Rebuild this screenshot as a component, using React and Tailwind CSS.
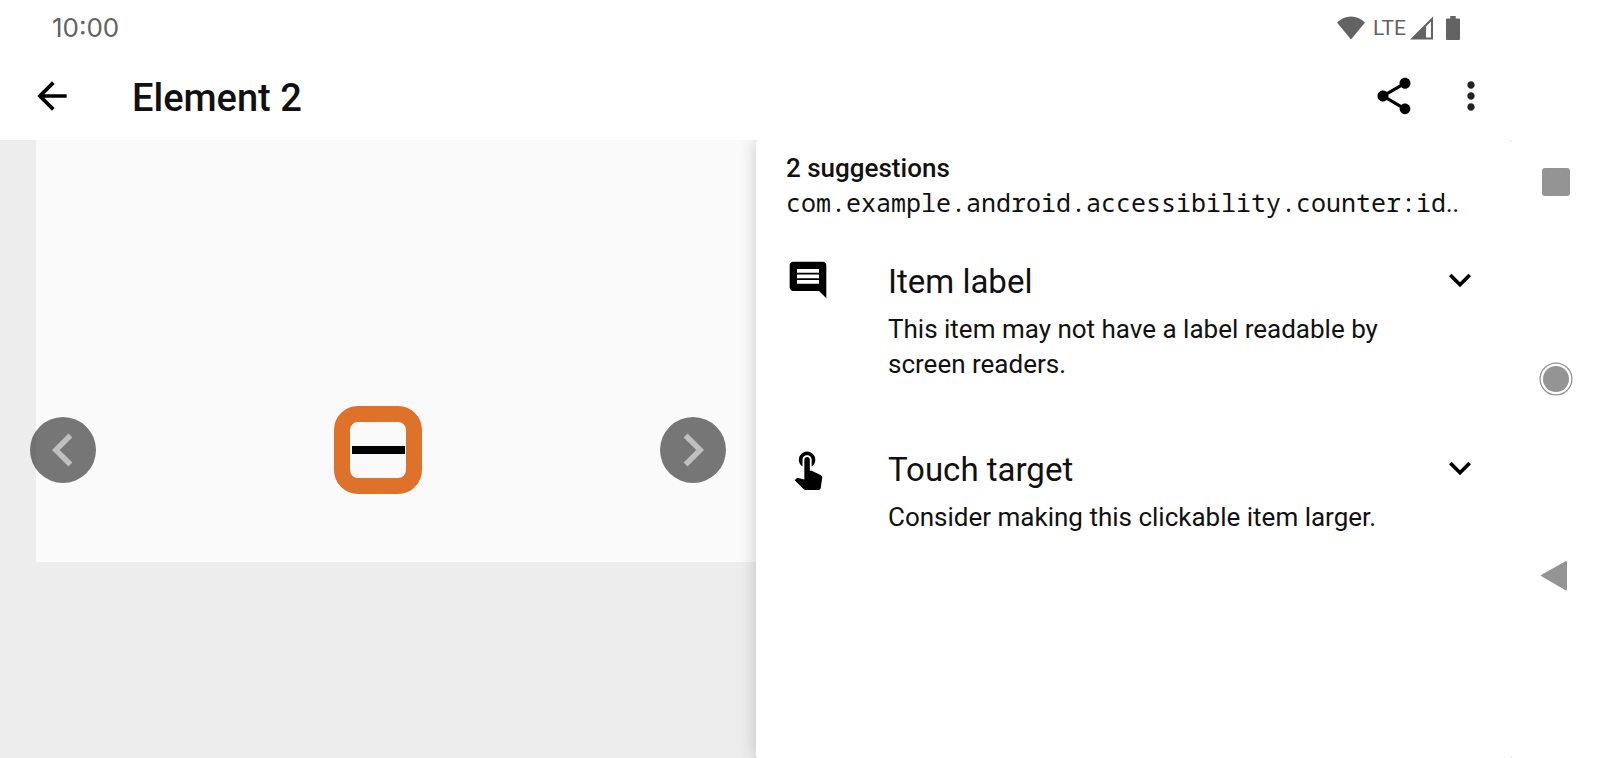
import React from "react";

function Icon({ d, className }) {
  return (
    <svg viewBox="0 0 24 24" className={className} fill="currentColor" aria-hidden="true">
      <path d={d} />
    </svg>
  );
}

const ICONS = {
  back: "M20 11H7.83l5.59-5.59L12 4l-8 8 8 8 1.41-1.41L7.83 13H20v-2z",
  share:
    "M18 16.08c-.76 0-1.44.3-1.96.77L8.91 12.7c.05-.23.09-.46.09-.7s-.04-.47-.09-.7l7.05-4.11c.54.5 1.25.81 2.04.81 1.66 0 3-1.34 3-3s-1.34-3-3-3-3 1.34-3 3c0 .24.04.47.09.7L8.04 9.81C7.5 9.31 6.79 9 6 9c-1.66 0-3 1.34-3 3s1.34 3 3 3c.79 0 1.5-.31 2.04-.81l7.12 4.16c-.05.21-.08.43-.08.65 0 1.61 1.31 2.92 2.92 2.92s2.92-1.31 2.92-2.92-1.31-2.92-2.92-2.92z",
  more: "M12 8c1.1 0 2-.9 2-2s-.9-2-2-2-2 .9-2 2 .9 2 2 2zm0 2c-1.1 0-2 .9-2 2s.9 2 2 2 2-.9 2-2-.9-2-2-2zm0 6c-1.1 0-2 .9-2 2s.9 2 2 2 2-.9 2-2-.9-2-2-2z",
  left: "M15.41 7.41L14 6l-6 6 6 6 1.41-1.41L10.83 12z",
  right: "M10 6L8.59 7.41 13.17 12l-4.58 4.59L10 18l6-6z",
  down: "M16.59 8.59L12 13.17 7.41 8.59 6 10l6 6 6-6z",
  comment:
    "M21.99 4c0-1.1-.89-2-1.99-2H4c-1.1 0-2 .9-2 2v12c0 1.1.9 2 2 2h14l4 4-.01-18zM18 14H6v-2h12v2zm0-3H6V9h12v2zm0-3H6V6h12v2z",
  touch:
    "M9 11.24V7.5C9 6.12 10.12 5 11.5 5S14 6.12 14 7.5v3.74c1.21-.81 2-2.18 2-3.74C16 5.01 13.99 3 11.5 3S7 5.01 7 7.5c0 1.56.79 2.93 2 3.74zm9.84 4.63l-4.54-2.26c-.17-.07-.35-.11-.54-.11H13v-6c0-.83-.67-1.5-1.5-1.5S10 6.67 10 7.5v10.74l-3.43-.72c-.08-.01-.15-.03-.24-.03-.31 0-.59.13-.79.33l-.79.8 4.94 4.94c.27.27.65.44 1.06.44h6.79c.75 0 1.33-.55 1.44-1.28l.75-5.27c.01-.07.02-.14.02-.2 0-.62-.38-1.16-.91-1.38z",
};

function StatusBar() {
  return (
    <div className="flex h-14 items-center justify-between px-[52px] text-[#636363]">
      <span className="font-['Inter',sans-serif] text-[26px] leading-none">10:00</span>
      <div className="flex items-center">
        <svg viewBox="0 0 28 24" className="h-6 w-7" fill="currentColor" aria-hidden="true">
          <path d="M0 6.500C4 2.600 8.800.5 14 .5s10 2.100 14 6L14 23.500z" />
        </svg>
        <span className="ml-2 text-[21px] leading-none">LTE</span>
        <svg viewBox="0 0 23 24" className="ml-1 h-6 w-[23px]" fill="currentColor" aria-hidden="true">
          <path fillRule="evenodd" d="M23 .5v23H0zM21 5.500l-5 5v11h5z" />
        </svg>
        <svg viewBox="0 0 14 24" className="ml-[13px] h-6 w-3.5" fill="currentColor" aria-hidden="true">
          <path d="M4.300 0h5.400v2.400H13a1 1 0 0 1 1 1V23a1 1 0 0 1-1 1H1a1 1 0 0 1-1-1V3.400a1 1 0 0 1 1-1h3.300z" />
        </svg>
      </div>
    </div>
  );
}

function AppBar() {
  return (
    <div className="flex h-[84px] items-center pr-[19px] pb-1 pl-[30px]">
      <button type="button" aria-label="Back" className="text-black">
        <Icon d={ICONS.back} className="size-11" />
      </button>
      <h1 className="ml-[58px] flex-1 pt-1 text-[38px] leading-[44px] font-medium">Element 2</h1>
      <button type="button" aria-label="Share" className="text-black">
        <Icon d={ICONS.share} className="size-11" />
      </button>
      <button type="button" aria-label="More options" className="ml-[33px] text-[#222]">
        <Icon d={ICONS.more} className="size-11" />
      </button>
    </div>
  );
}

function PageButton({ label, d }) {
  return (
    <button type="button" aria-label={label} className="rounded-full bg-black/53 text-[#bfbfbf]">
      <Icon d={d} className="size-[66px]" />
    </button>
  );
}

function Preview() {
  return (
    <section aria-label="Preview" className="grid grid-cols-1 content-start bg-[#ededed]">
      <div className="col-start-1 row-start-1 ml-9 h-[422px] bg-[#fafafa]" />
      <div className="col-start-1 row-start-1 flex items-center justify-between px-[30px] pt-[198px]">
        <PageButton label="Previous element" d={ICONS.left} />
        <div className="flex size-[88px] items-center justify-center rounded-3xl border-[16px] border-[#de722a]">
          <div className="h-2 w-[53px] shrink-0 bg-black" />
        </div>
        <PageButton label="Next element" d={ICONS.right} />
      </div>
    </section>
  );
}

function Suggestion({ icon, title, children }) {
  return (
    <li className="flex items-start">
      <Icon d={icon} className="size-11 shrink-0 text-black" />
      <div className="ml-[58px] flex-1">
        <h3 className="text-[33px] leading-[48px]">{title}</h3>
        <p className="mt-1.5 text-[26px] leading-[35px]">{children}</p>
      </div>
      <button type="button" aria-label={"Expand " + title} className="shrink-0 text-black">
        <Icon d={ICONS.down} className="size-11" />
      </button>
    </li>
  );
}

function Suggestions() {
  return (
    <section className="min-w-0 rounded-[3px] bg-white px-[30px] pt-[11px] shadow-[0_0_18px_rgba(0,0,0,0.2)]">
      <h2 className="text-[26px] leading-[35px] font-medium">2 suggestions</h2>
      <p className="overflow-hidden font-['Noto_Sans_Mono','DejaVu_Sans_Mono',monospace] text-[25px] leading-[33px] whitespace-nowrap">
        com.example.android.accessibility.counter:id
        <span className="font-['Roboto',sans-serif]">..</span>
      </p>
      <ul className="mt-[38px] flex flex-col gap-16">
        <Suggestion icon={ICONS.comment} title="Item label">
          This item may not have a label readable by screen readers.
        </Suggestion>
        <Suggestion icon={ICONS.touch} title="Touch target">
          Consider making this clickable item larger.
        </Suggestion>
      </ul>
    </section>
  );
}

function SystemNav() {
  return (
    <nav
      aria-label="System"
      className="relative flex w-[88px] shrink-0 flex-col items-center justify-between bg-white py-[154px] text-[#949494]"
    >
      <button type="button" aria-label="Recent apps" className="flex size-14 items-center justify-center">
        <span className="size-7 rounded-[3px] bg-current" />
      </button>
      <button type="button" aria-label="Home" className="flex size-14 items-center justify-center">
        <svg viewBox="0 0 34 34" className="size-[34px]" aria-hidden="true">
          <circle cx="17" cy="17" r="15.900" fill="none" stroke="currentColor" strokeWidth="1.300" />
          <circle cx="17" cy="17" r="13" fill="currentColor" />
        </svg>
      </button>
      <button type="button" aria-label="Back to previous app" className="flex size-14 items-center justify-center">
        <svg viewBox="0 0 30 30" className="size-[30px]" aria-hidden="true">
          <path
            d="M1 14.500 25 1V28.500z"
            fill="currentColor"
            stroke="currentColor"
            strokeWidth="2"
            strokeLinejoin="round"
          />
        </svg>
      </button>
    </nav>
  );
}

export default function App() {
  return (
    <div className="flex min-h-screen bg-white font-['Roboto',sans-serif] text-[#111]">
      <div className="flex min-w-0 flex-1 flex-col">
        <header>
          <StatusBar />
          <AppBar />
        </header>
        <main className="grid flex-1 grid-cols-2 overflow-hidden bg-[#ededed]">
          <Preview />
          <Suggestions />
        </main>
      </div>
      <SystemNav />
    </div>
  );
}
